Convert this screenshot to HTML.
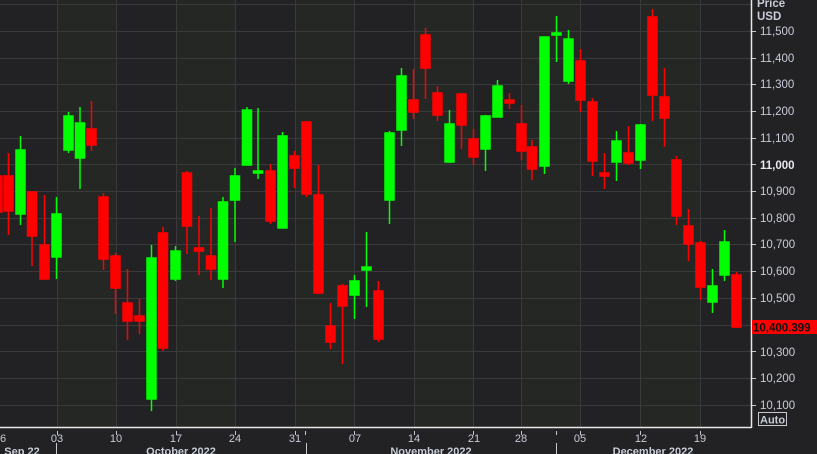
<!DOCTYPE html>
<html><head><meta charset="utf-8"><style>
html,body{margin:0;padding:0;background:#222224;width:817px;height:454px;overflow:hidden}
svg{display:block}
text{font-family:"Liberation Sans",sans-serif}
</style></head><body>
<svg width="817" height="454" viewBox="0 0 817 454" xmlns="http://www.w3.org/2000/svg">
<rect width="817" height="454" fill="#222224"/>
<g fill="#252725">
<rect x="57" y="0" width="59" height="427"/>
<rect x="176" y="0" width="59" height="427"/>
<rect x="296" y="0" width="59" height="427"/>
<rect x="414" y="0" width="60" height="427"/>
<rect x="521" y="0" width="59" height="427"/>
<rect x="641" y="0" width="59" height="427"/>
</g>
<g stroke="#3a3a3c" stroke-width="1">
<line x1="0" y1="4.5" x2="751" y2="4.5"/>
<line x1="0" y1="31.5" x2="751" y2="31.5"/>
<line x1="0" y1="58.5" x2="751" y2="58.5"/>
<line x1="0" y1="84.5" x2="751" y2="84.5"/>
<line x1="0" y1="111.5" x2="751" y2="111.5"/>
<line x1="0" y1="138.5" x2="751" y2="138.5"/>
<line x1="0" y1="164.5" x2="751" y2="164.5"/>
<line x1="0" y1="191.5" x2="751" y2="191.5"/>
<line x1="0" y1="218.5" x2="751" y2="218.5"/>
<line x1="0" y1="244.5" x2="751" y2="244.5"/>
<line x1="0" y1="271.5" x2="751" y2="271.5"/>
<line x1="0" y1="298.5" x2="751" y2="298.5"/>
<line x1="0" y1="325.5" x2="751" y2="325.5"/>
<line x1="0" y1="351.5" x2="751" y2="351.5"/>
<line x1="0" y1="378.5" x2="751" y2="378.5"/>
<line x1="0" y1="405.5" x2="751" y2="405.5"/>
<line x1="57.5" y1="0" x2="57.5" y2="427"/>
<line x1="116.5" y1="0" x2="116.5" y2="427"/>
<line x1="176.5" y1="0" x2="176.5" y2="427"/>
<line x1="235.5" y1="0" x2="235.5" y2="427"/>
<line x1="295.5" y1="0" x2="295.5" y2="427"/>
<line x1="354.5" y1="0" x2="354.5" y2="427"/>
<line x1="414.5" y1="0" x2="414.5" y2="427"/>
<line x1="473.5" y1="0" x2="473.5" y2="427"/>
<line x1="521.5" y1="0" x2="521.5" y2="427"/>
<line x1="580.5" y1="0" x2="580.5" y2="427"/>
<line x1="640.5" y1="0" x2="640.5" y2="427"/>
<line x1="700.5" y1="0" x2="700.5" y2="427"/>
</g>
<g id="c">
<!-- candles: R red, G green -->
<g stroke="#ff0000" stroke-width="1.5" fill="#ff0000">
<line x1="-3" y1="150" x2="-3" y2="230"/><rect x="-7" y="176" width="9" height="36"/>
<line x1="8.5" y1="153" x2="8.5" y2="235"/><rect x="4" y="176" width="9" height="35"/>
<line x1="32" y1="192" x2="32" y2="266"/><rect x="27.5" y="192" width="9" height="44"/>
<line x1="44.5" y1="195" x2="44.5" y2="280"/><rect x="40" y="245" width="9" height="34"/>
<line x1="91.5" y1="101" x2="91.5" y2="151"/><rect x="87" y="129" width="9" height="16"/>
<line x1="103.5" y1="193" x2="103.5" y2="270"/><rect x="99" y="197" width="9" height="62"/>
<line x1="115.5" y1="253" x2="115.5" y2="314"/><rect x="111" y="256" width="9" height="32"/>
<line x1="127.5" y1="269" x2="127.5" y2="340"/><rect x="123" y="303" width="9" height="18"/>
<line x1="139.5" y1="299" x2="139.5" y2="334"/><rect x="135" y="316" width="9" height="5"/>
<line x1="163" y1="227" x2="163" y2="351"/><rect x="158.5" y="233" width="9" height="115"/>
<line x1="187" y1="171" x2="187" y2="254"/><rect x="182.5" y="173" width="9" height="53"/>
<line x1="199" y1="216" x2="199" y2="275"/><rect x="194.5" y="248" width="9" height="3"/>
<line x1="211" y1="208" x2="211" y2="280"/><rect x="206.5" y="256" width="9" height="13"/>
<line x1="270.5" y1="164" x2="270.5" y2="224"/><rect x="266" y="171" width="9" height="50"/>
<line x1="294.5" y1="151" x2="294.5" y2="188"/><rect x="290" y="156" width="9" height="12"/>
<line x1="306.5" y1="121" x2="306.5" y2="197"/><rect x="302" y="122" width="9" height="72"/>
<line x1="318.5" y1="165" x2="318.5" y2="294"/><rect x="314" y="195" width="9" height="98"/>
<line x1="330.5" y1="303" x2="330.5" y2="349"/><rect x="326" y="326" width="9" height="16"/>
<line x1="342.5" y1="284" x2="342.5" y2="364"/><rect x="338" y="286" width="9" height="20"/>
<line x1="378.5" y1="281" x2="378.5" y2="342"/><rect x="374" y="291" width="9" height="48"/>
<line x1="413.5" y1="69" x2="413.5" y2="119"/><rect x="409" y="100" width="9" height="12"/>
<line x1="425.5" y1="28" x2="425.5" y2="99"/><rect x="421" y="35" width="9" height="33"/>
<line x1="437.5" y1="86" x2="437.5" y2="121"/><rect x="433" y="93" width="9" height="22"/>
<line x1="461.5" y1="93" x2="461.5" y2="149"/><rect x="457" y="94" width="9" height="31"/>
<line x1="473.5" y1="129" x2="473.5" y2="165"/><rect x="469" y="139" width="9" height="18"/>
<line x1="509.5" y1="93" x2="509.5" y2="109"/><rect x="505" y="100" width="9" height="3"/>
<line x1="521.5" y1="105" x2="521.5" y2="160"/><rect x="517" y="124" width="9" height="27"/>
<line x1="532" y1="140" x2="532" y2="180"/><rect x="527.5" y="147" width="9" height="22"/>
<line x1="580.5" y1="49" x2="580.5" y2="112"/><rect x="576" y="61" width="9" height="39"/>
<line x1="592.5" y1="98" x2="592.5" y2="176"/><rect x="588" y="102" width="9" height="59"/>
<line x1="604.5" y1="153" x2="604.5" y2="189"/><rect x="600" y="173" width="9" height="3"/>
<line x1="628.5" y1="126" x2="628.5" y2="165"/><rect x="624" y="153" width="9" height="10"/>
<line x1="652.5" y1="9" x2="652.5" y2="121"/><rect x="648" y="17" width="9" height="78"/>
<line x1="664.5" y1="68" x2="664.5" y2="147"/><rect x="660" y="97" width="9" height="21"/>
<line x1="676.5" y1="156" x2="676.5" y2="225"/><rect x="672" y="160" width="9" height="56"/>
<line x1="688.5" y1="209" x2="688.5" y2="261"/><rect x="684" y="226" width="9" height="18"/>
<line x1="700.5" y1="241" x2="700.5" y2="300"/><rect x="696" y="243" width="9" height="44"/>
<line x1="736.5" y1="272" x2="736.5" y2="328"/><rect x="732" y="275" width="9" height="52"/>
</g>
<g stroke="#00ff00" stroke-width="1.5" fill="#00ff00">
<line x1="20.5" y1="136" x2="20.5" y2="225"/><rect x="16" y="150" width="9" height="64"/>
<line x1="56.5" y1="197" x2="56.5" y2="279"/><rect x="52" y="214" width="9" height="43"/>
<line x1="68.5" y1="112" x2="68.5" y2="153"/><rect x="64" y="116" width="9" height="34"/>
<line x1="80" y1="107" x2="80" y2="189"/><rect x="75.5" y="123" width="9" height="35"/>
<line x1="151.5" y1="245" x2="151.5" y2="411"/><rect x="147" y="258" width="9" height="141"/>
<line x1="175.5" y1="246" x2="175.5" y2="281"/><rect x="171" y="251" width="9" height="28"/>
<line x1="223" y1="197" x2="223" y2="288"/><rect x="218.5" y="202" width="9" height="77"/>
<line x1="235" y1="168" x2="235" y2="242"/><rect x="230.5" y="176" width="9" height="24"/>
<line x1="247" y1="107" x2="247" y2="165"/><rect x="242.5" y="110" width="9" height="55"/>
<line x1="258" y1="108" x2="258" y2="179"/><rect x="253.5" y="171" width="9" height="2"/>
<line x1="282.5" y1="132" x2="282.5" y2="228"/><rect x="278" y="136" width="9" height="92"/>
<line x1="354.5" y1="275" x2="354.5" y2="319"/><rect x="350" y="281" width="9" height="14"/>
<line x1="366.5" y1="232" x2="366.5" y2="307"/><rect x="362" y="267" width="9" height="3"/>
<line x1="389.5" y1="131" x2="389.5" y2="224"/><rect x="385" y="133" width="9" height="67"/>
<line x1="401.5" y1="68" x2="401.5" y2="146"/><rect x="397" y="76" width="9" height="54"/>
<line x1="449.5" y1="110" x2="449.5" y2="163"/><rect x="445" y="124" width="9" height="38"/>
<line x1="485.5" y1="115" x2="485.5" y2="171"/><rect x="481" y="116" width="9" height="33"/>
<line x1="497.5" y1="80" x2="497.5" y2="117"/><rect x="493" y="86" width="9" height="31"/>
<line x1="544.5" y1="37" x2="544.5" y2="174"/><rect x="540" y="37" width="9" height="129"/>
<line x1="556.5" y1="16" x2="556.5" y2="62"/><rect x="552" y="33" width="9" height="2"/>
<line x1="568.5" y1="30" x2="568.5" y2="84"/><rect x="564" y="39" width="9" height="42"/>
<line x1="616.5" y1="131" x2="616.5" y2="181"/><rect x="612" y="141" width="9" height="21"/>
<line x1="640.5" y1="124" x2="640.5" y2="169"/><rect x="636" y="125" width="9" height="35"/>
<line x1="712.5" y1="269" x2="712.5" y2="313"/><rect x="708" y="286" width="9" height="16"/>
<line x1="724.5" y1="230" x2="724.5" y2="281"/><rect x="720" y="242" width="9" height="33"/>
</g>
</g>
<rect x="752" y="0" width="65" height="454" fill="#222224"/>
<line x1="0" y1="427.5" x2="751.5" y2="427.5" stroke="#e8e8e8" stroke-width="1.5"/>
<line x1="751.5" y1="0" x2="751.5" y2="428" stroke="#e8e8e8" stroke-width="1.5"/>
<g stroke="#c8c8d0" stroke-width="1">
<line x1="752" y1="31.5" x2="756" y2="31.5"/><line x1="752" y1="58.5" x2="756" y2="58.5"/>
<line x1="752" y1="84.5" x2="756" y2="84.5"/><line x1="752" y1="111.5" x2="756" y2="111.5"/>
<line x1="752" y1="138.5" x2="756" y2="138.5"/><line x1="752" y1="164.5" x2="756" y2="164.5"/>
<line x1="752" y1="191.5" x2="756" y2="191.5"/><line x1="752" y1="218.5" x2="756" y2="218.5"/>
<line x1="752" y1="244.5" x2="756" y2="244.5"/><line x1="752" y1="271.5" x2="756" y2="271.5"/>
<line x1="752" y1="298.5" x2="756" y2="298.5"/><line x1="752" y1="351.5" x2="756" y2="351.5"/>
<line x1="752" y1="378.5" x2="756" y2="378.5"/><line x1="752" y1="405.5" x2="756" y2="405.5"/>
</g>
<g fill="#c8ccd8" font-size="11.5">
<text x="757" y="7" font-weight="bold">Price</text>
<text x="757" y="20" font-weight="bold">USD</text>
<text x="760" y="35">11,500</text>
<text x="760" y="62">11,400</text>
<text x="760" y="88">11,300</text>
<text x="760" y="115">11,200</text>
<text x="760" y="142">11,100</text>
<text x="760" y="169" font-weight="bold" fill="#e8e8f0">11,000</text>
<text x="760" y="195">10,900</text>
<text x="760" y="222">10,800</text>
<text x="760" y="248">10,700</text>
<text x="760" y="275">10,600</text>
<text x="760" y="302">10,500</text>
<text x="760" y="356">10,300</text>
<text x="760" y="382">10,200</text>
<text x="760" y="409">10,100</text>
</g>
<rect x="752" y="320" width="65" height="14" fill="#ff0000"/>
<text x="753" y="331.5" font-size="11.5" font-weight="bold" fill="#111">10,400.399</text>
<rect x="758.5" y="412.5" width="28" height="13" fill="none" stroke="#c8c8d0" stroke-width="1"/>
<text x="760" y="423.5" font-size="11" font-weight="bold" fill="#c8ccd8">Auto</text>
<g stroke="#c8c8d0" stroke-width="1">
<line x1="57.5" y1="431" x2="57.5" y2="435"/><line x1="116.5" y1="431" x2="116.5" y2="435"/>
<line x1="176.5" y1="431" x2="176.5" y2="435"/><line x1="235.5" y1="431" x2="235.5" y2="435"/>
<line x1="295.5" y1="431" x2="295.5" y2="435"/><line x1="305.5" y1="431" x2="305.5" y2="435"/>
<line x1="354.5" y1="431" x2="354.5" y2="435"/><line x1="414.5" y1="431" x2="414.5" y2="435"/>
<line x1="473.5" y1="431" x2="473.5" y2="435"/><line x1="521.5" y1="431" x2="521.5" y2="435"/>
<line x1="556.5" y1="431" x2="556.5" y2="435"/><line x1="580.5" y1="431" x2="580.5" y2="435"/>
<line x1="640.5" y1="431" x2="640.5" y2="435"/><line x1="700.5" y1="431" x2="700.5" y2="435"/>
<line x1="56.5" y1="443" x2="56.5" y2="454"/><line x1="306.5" y1="443" x2="306.5" y2="454"/>
<line x1="556.5" y1="443" x2="556.5" y2="454"/>
</g>
<g fill="#c8ccd8" font-size="11" text-anchor="middle">
<text x="3" y="442">6</text>
<text x="57" y="442">03</text>
<text x="116" y="442">10</text>
<text x="176" y="442">17</text>
<text x="235" y="442">24</text>
<text x="295" y="442">31</text>
<text x="355" y="442">07</text>
<text x="414" y="442">14</text>
<text x="474" y="442">21</text>
<text x="521" y="442">28</text>
<text x="580" y="442">05</text>
<text x="641" y="442">12</text>
<text x="700" y="442">19</text>
<g font-weight="bold">
<text x="22" y="455">Sep 22</text>
<text x="181" y="455">October 2022</text>
<text x="431" y="455">November 2022</text>
<text x="653" y="455">December 2022</text>
</g>
</g>
</svg>
</body></html>
